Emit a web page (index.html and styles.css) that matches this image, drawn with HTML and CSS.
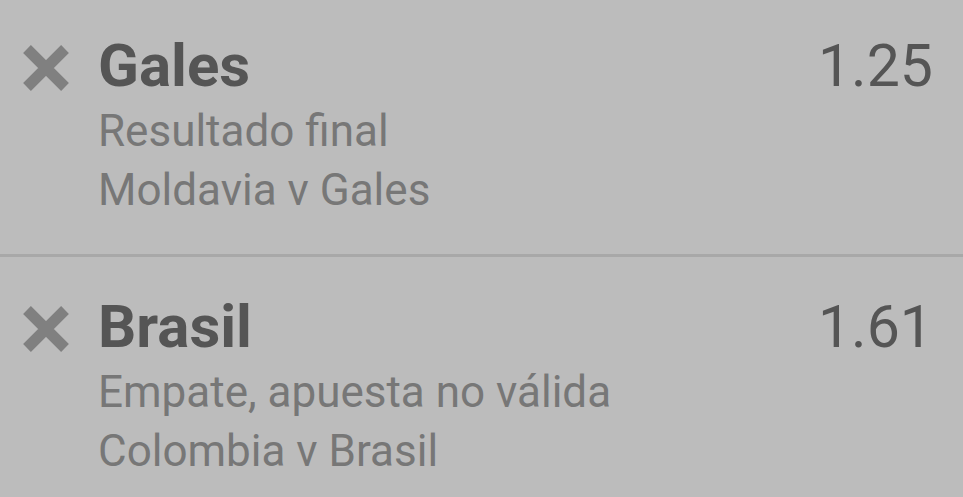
FILE: index.html
```html
<!DOCTYPE html>
<html lang="es">

<head>
    <meta charset="UTF-8" />
    <title>Apuestas</title>
    <meta name="viewport" content="width=device-width, initial-scale=1.0">
    <link rel="stylesheet" href="styles.css">
</head>

<body>
    <div class="bet-list">
        <!-- Selección 1 -->
        <div class="bet-row">
            <button class="remove-btn" aria-label="Quitar">
                <svg viewBox="0 0 46 46" width="46" height="46">
                    <path d="M4 4 L42 42 M42 4 L4 42" />
                </svg>
            </button>
            <div class="bet-info">
                <div class="bet-pick">Gales</div>
                <div class="bet-market">Resultado final</div>
                <div class="bet-event">Moldavia v Gales</div>
            </div>
            <div class="bet-odds">1.25</div>
        </div>

        <!-- Selección 2 -->
        <div class="bet-row">
            <button class="remove-btn" aria-label="Quitar">
                <svg viewBox="0 0 46 46" width="46" height="46">
                    <path d="M4 4 L42 42 M42 4 L4 42" />
                </svg>
            </button>
            <div class="bet-info">
                <div class="bet-pick">Brasil</div>
                <div class="bet-market">Empate, apuesta no válida</div>
                <div class="bet-event">Colombia v Brasil</div>
            </div>
            <div class="bet-odds">1.61</div>
        </div>
    </div>
</body>

</html>
```

FILE: styles.css
```css
* {
    margin: 0;
    padding: 0;
    box-sizing: border-box;
}

html,
body {
    width: 100%;
    min-height: 100%;
    font-family: Roboto, "Noto Sans", Arial, sans-serif;
    background-color: #bcbcbc;
    color: #555;
    overflow: hidden;
}

.bet-list {
    display: flex;
    flex-direction: column;
}

/* Строка купона */
.bet-row {
    display: grid;
    grid-template-columns: 46px 1fr auto;
    column-gap: 29px;
    padding: 34px 30px 34px 23px;
    border-bottom: 3px solid #a8a8a8;
}

.bet-row:first-child {
    padding-top: 30px;
}

.bet-row:last-child {
    border-bottom: none;
}

.remove-btn {
    background: none;
    border: none;
    width: 46px;
    height: 46px;
    margin-top: 15px;
    cursor: pointer;
}

.remove-btn svg {
    display: block;
}

.remove-btn path {
    stroke: #808080;
    stroke-width: 11;
    fill: none;
}

.bet-info {
    display: flex;
    flex-direction: column;
}

.bet-pick {
    font-size: 60px;
    font-weight: bold;
    line-height: 72px;
    color: #555;
}

.bet-market,
.bet-event {
    font-size: 44px;
    line-height: 59px;
    color: #777;
}

.bet-odds {
    font-size: 59px;
    line-height: 72px;
    color: #555;
}
```
